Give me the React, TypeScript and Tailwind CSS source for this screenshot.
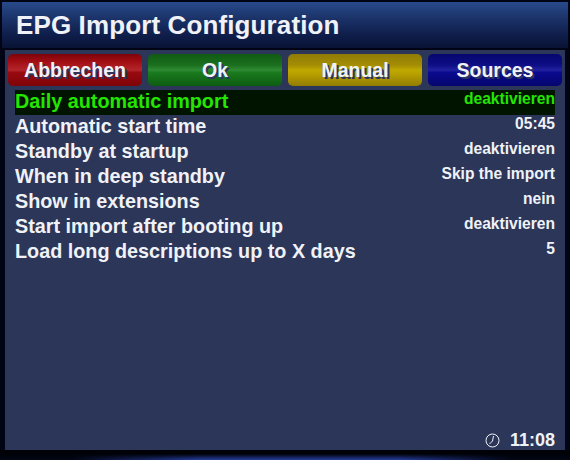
const rows: [string, string][] = [
  ["Daily automatic import", "deaktivieren"],
  ["Automatic start time", "05:45"],
  ["Standby at startup", "deaktivieren"],
  ["When in deep standby", "Skip the import"],
  ["Show in extensions", "nein"],
  ["Start import after booting up", "deaktivieren"],
  ["Load long descriptions up to X days", "5"],
];

const buttons = [
  { label: "Abbrechen", cls: "bg-[linear-gradient(180deg,#7d0309_0%,#a30f14_25%,#b3262b_50%,#980a0f_58%,#7e0408_100%)]" },
  { label: "Ok", cls: "bg-[linear-gradient(180deg,#0f5a13_0%,#1c701f_35%,#308a33_50%,#1a7a1e_58%,#0d5c11_100%)]" },
  { label: "Manual", cls: "bg-[linear-gradient(180deg,#8f7a05_0%,#a58e04_35%,#bfa900_50%,#b8a000_62%,#927c02_100%)]" },
  { label: "Sources", cls: "bg-[linear-gradient(180deg,#06066e_0%,#0e0e86_35%,#2222a0_50%,#0a0a8e_58%,#05056e_100%)]" },
];

export default function App() {
  return (
    <div className="w-[570px] h-[460px] overflow-hidden flex flex-col bg-[#010414] font-['Liberation_Sans',Arial,sans-serif] font-bold text-[#f0f2f7]">
      <div className="h-[46px] mt-[2px] ml-[2px] mr-[2px] shrink-0 pl-[14px] flex items-center bg-[linear-gradient(180deg,#284a8a_0%,#1b3369_35%,#0e1c48_75%,#0a1334_100%)]">
        <span className="text-[26px] leading-[30px] tracking-[0.12px] -mt-[1px]">EPG Import Configuration</span>
      </div>
      <div className="mt-[2px] ml-[5px] mr-[5px] h-[400px] shrink-0 bg-[#2c3659] flex flex-col pt-[4px] pl-[3px] pr-[3px]">
        <div className="flex gap-[6px]">
          {buttons.map((b) => (
            <div key={b.label} className={`w-[134px] h-[32px] pt-[1px] rounded-[5px] flex items-center justify-center text-[19.5px] [text-shadow:2px_2px_0_#2a3560] ${b.cls}`}>
              {b.label}
            </div>
          ))}
        </div>
        <div className="mt-[4px] ml-[7px] mr-[7px] flex flex-col">
          {rows.map(([l, v], i) => (
            <div key={l} className={`h-[25px] flex justify-between ${i === 0 ? "bg-[#001400] text-[#24e600]" : ""}`}>
              <span className="text-[19.8px] leading-[23px]">{l}</span>
              <span className="text-[15.6px] leading-[18px]">{v}</span>
            </div>
          ))}
        </div>
        <div className="mt-auto mr-[7px] flex items-center justify-end gap-[10px]">
          <svg width="15" height="15" viewBox="0 0 15 15" fill="none" stroke="#f0f2f7" strokeWidth="1">
            <circle cx="7.5" cy="7.5" r="6.5" />
            <path d="M8.5 3 L7.5 8 L4.5 11" />
          </svg>
          <span className="text-[18px] leading-[20px]">11:08</span>
        </div>
      </div>
      <div className="flex-1 bg-[linear-gradient(180deg,#000208_0%,#000208_40%,rgba(0,2,8,0)_100%),linear-gradient(90deg,#010414_0%,#010414_12%,#233c9c_35%,#233c9c_70%,#010414_90%,#010414_100%)]" />
    </div>
  );
}
